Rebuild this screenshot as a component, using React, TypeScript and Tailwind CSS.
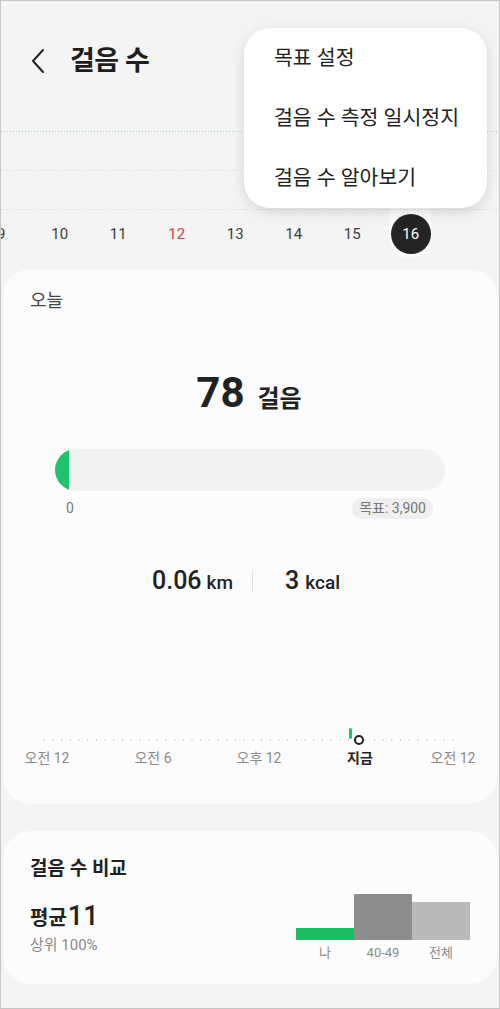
import React from "react";

const FONT = { fontFamily: 'Roboto, "Noto Sans CJK KR", "Noto Sans", sans-serif' };

const days = [
  { d: "9" },
  { d: "10" },
  { d: "11" },
  { d: "12", red: true },
  { d: "13" },
  { d: "14" },
  { d: "15" },
  { d: "16", sel: true },
];

const timeLabels = [
  { t: "오전 12", x: 44 },
  { t: "오전 6", x: 150 },
  { t: "오후 12", x: 256 },
  { t: "지금", x: 357, now: true },
  { t: "오전 12", x: 450 },
];

export default function App() {
  return (
    <div
      style={FONT}
      className="relative w-[500px] h-[1009px] overflow-hidden bg-[#f4f4f4] border border-[#c6c6c6] text-[#1e1e1e]"
    >
      {/* header */}
      <div className="h-[130px] pt-[40px]">
        <div className="flex items-center h-[40px]">
          <div className="w-[69px] flex justify-start pl-[29px]">
            <svg width="18" height="26" viewBox="0 0 18 26" fill="none">
              <path d="M13 2 L3 13 L13 24" stroke="#222" strokeWidth="2" strokeLinecap="round" strokeLinejoin="round" />
            </svg>
          </div>
          <div className="text-[27px] font-bold tracking-[-0.5px]">걸음 수</div>
        </div>
      </div>

      {/* chart area */}
      <div className="relative">
        <div className="absolute left-[388px] top-[0px] w-[42px] h-[127px] bg-[#fbfbfb] rounded-b-[21px]" />
        <div className="relative h-[39px] bg-[linear-gradient(to_right,#9fd3c2_1px,transparent_1px)] bg-[length:3px_1px] bg-repeat-x" />
        <div className="relative h-[39px] bg-[linear-gradient(to_right,#d4d4d4_1px,transparent_1px)] bg-[length:3px_1px] bg-repeat-x" />
        <div className="relative h-[5px] bg-[linear-gradient(to_right,#d4d4d4_1px,transparent_1px)] bg-[length:3px_1px] bg-repeat-x" />
        <div className="relative flex ml-[-29px] h-[40px] items-center">
          {days.map((d) => (
            <div key={d.d} className="w-[58.5px] flex justify-center">
              {d.sel ? (
                <div className="w-[40px] h-[40px] rounded-full bg-[#242424] text-white text-[15px] flex items-center justify-center">
                  {d.d}
                </div>
              ) : (
                <span className={`text-[15px] ${d.red ? "text-[#c7453c]" : "text-[#3c3c3c]"}`}>{d.d}</span>
              )}
            </div>
          ))}
        </div>
      </div>

      {/* today card */}
      <div className="mt-[15px] mx-[2px] h-[535px] rounded-[28px] bg-[#fcfcfc] pt-[20px]">
        <div className="pl-[27px] text-[18px] leading-[24px] text-[#444]">오늘</div>
        <div className="mt-[56px] h-[48px] flex items-baseline justify-center pr-[2px]">
          <span className="text-[42px] font-bold leading-[48px] text-[#222]">78</span>
          <span className="ml-[13px] text-[24px] font-bold text-[#222]">걸음</span>
        </div>
        <div className="mt-[32px] px-[52px]">
          <div className="h-[42px] rounded-full bg-[#f2f2f2] overflow-hidden flex">
            <div className="w-[14px] h-[42px] bg-[#1fc36c] rounded-l-full" />
          </div>
          <div className="mt-[7px] h-[21px] flex items-center justify-between pl-[11px] pr-[12px]">
            <span className="text-[14px] text-[#777]">0</span>
            <span className="h-[21px] px-[7px] rounded-full bg-[#efefef] text-[14px] leading-[21px] text-[#777]">목표: 3,900</span>
          </div>
        </div>
        <div className="mt-[46px] h-[32px] flex items-center justify-center pr-[8px]">
          <div className="flex items-baseline">
            <span className="text-[25px] font-medium text-[#222]">0.06</span>
            <span className="ml-[5px] text-[19px] font-medium text-[#222]">km</span>
          </div>
          <div className="mx-[19px] w-[1px] h-[20px] bg-[#dedede]" />
          <div className="ml-[13px] flex items-baseline">
            <span className="text-[25px] font-medium text-[#222]">3</span>
            <span className="ml-[6px] text-[19px] font-medium text-[#222]">kcal</span>
          </div>
        </div>
        {/* timeline */}
        <div className="relative mt-[127px] h-[44px]">
          <div className="absolute left-[37px] right-[36px] top-[15px] h-[2px] bg-[radial-gradient(circle,#c8c8c8_0.8px,transparent_1px)] bg-[length:8.7px_2px] bg-repeat-x" />
          <div className="absolute left-[346px] top-[4px] w-[3px] h-[11px] rounded-full bg-[#1fc36c]" />
          <div className="absolute left-[351px] top-[11px] w-[10px] h-[10px] rounded-full border-2 border-[#222] bg-[#fcfcfc]" />
          {timeLabels.map((l) => (
            <span
              key={l.t + l.x}
              style={{ left: l.x }}
              className={`absolute top-[24px] -translate-x-1/2 whitespace-nowrap text-[14px] leading-[20px] ${
                l.now ? "font-bold text-[#222]" : "text-[#8a8a8a]"
              }`}
            >
              {l.t}
            </span>
          ))}
        </div>
      </div>

      {/* compare card */}
      <div className="mt-[27px] mx-[2px] h-[153px] rounded-[28px] bg-[#fcfcfc] pt-[25px] px-[27px]">
        <div className="text-[19px] leading-[26px] font-bold text-[#222]">걸음 수 비교</div>
        <div className="mt-[12px] flex justify-between">
          <div className="pt-[6px]">
            <div className="h-[32px] flex items-baseline">
              <span className="text-[20px] font-bold text-[#222]">평균</span>
              <span className="ml-[1px] text-[27px] font-medium leading-[32px] text-[#222]">11</span>
            </div>
            <div className="mt-[3px] text-[15px] leading-[20px] text-[#8a8a8a]">상위 100%</div>
          </div>
          <div className="flex flex-col">
            <div className="flex items-end h-[46px]">
              <div className="w-[58px] h-[12px] bg-[#1ebd62]" />
              <div className="w-[58px] h-[46px] bg-[#8d8d8d]" />
              <div className="w-[58px] h-[38px] bg-[#bababa]" />
            </div>
            <div className="flex mt-[4px]">
              <span className="w-[58px] text-center text-[13px] leading-[18px] text-[#8a8a8a]">나</span>
              <span className="w-[58px] text-center text-[13px] leading-[18px] text-[#8a8a8a]">40-49</span>
              <span className="w-[58px] text-center text-[13px] leading-[18px] text-[#8a8a8a]">전체</span>
            </div>
          </div>
        </div>
      </div>

      {/* popup menu */}
      <div className="absolute left-[243px] top-[27px] w-[243px] h-[180px] rounded-[26px] bg-white shadow-[0_4px_14px_rgba(0,0,0,0.13)] flex flex-col pt-[1px]">
        {["목표 설정", "걸음 수 측정 일시정지", "걸음 수 알아보기"].map((t) => (
          <div key={t} className="h-[60px] flex items-center pl-[30px] text-[20.5px] text-[#222]">
            {t}
          </div>
        ))}
      </div>
    </div>
  );
}
